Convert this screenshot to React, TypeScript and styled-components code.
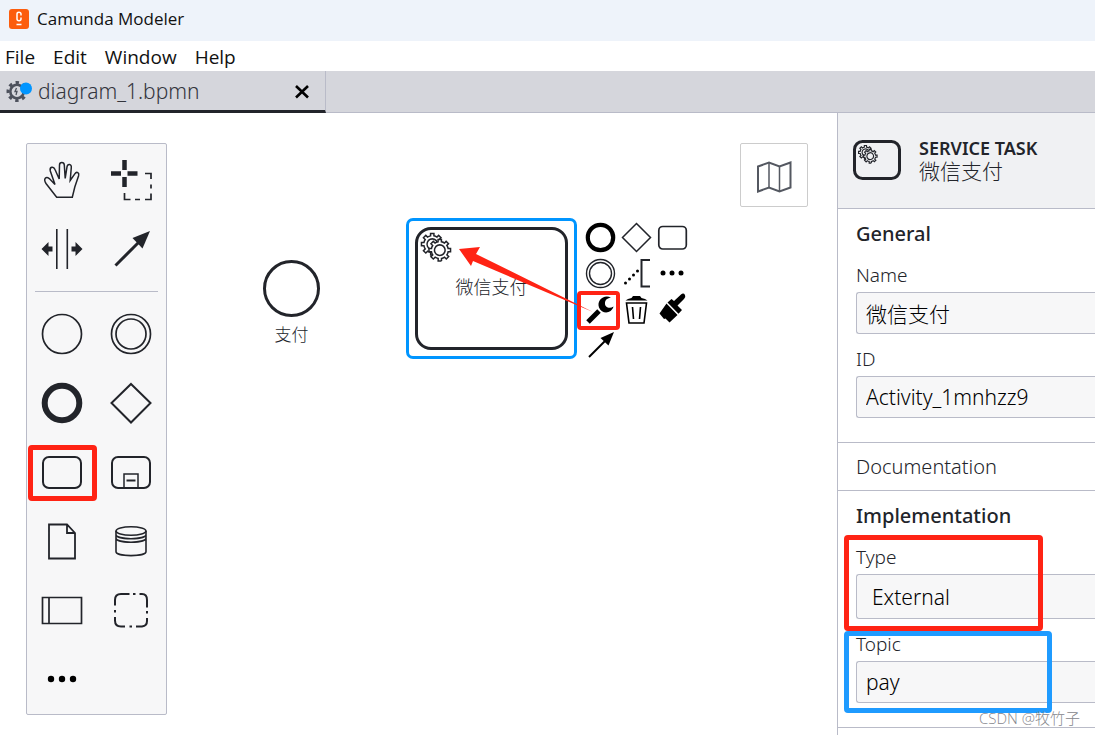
import React from 'react';
import styled, { createGlobalStyle } from 'styled-components';

const ink = '#22242a';
const line = '#b9bbc8';
const red = '#ff2314';
const blue = '#0095ff';

const Global = createGlobalStyle`
  * { box-sizing: border-box; }
  html, body, #root { height: 100%; }
  body { margin: 0; overflow: hidden; background: #fff; }
  button, input, select { font: inherit; color: inherit; margin: 0; }
  svg { display: block; flex: none; }
`;

const Window = styled.div`
  display: flex;
  flex-direction: column;
  height: 100vh;
  overflow: hidden;
  color: ${ink};
  font-family: 'Noto Sans', 'Noto Sans CJK SC', sans-serif;
  font-weight: 300;
  font-size: 21px;
`;

const TitleBar = styled.header`
  flex: none;
  display: flex;
  align-items: center;
  gap: 8px;
  height: 41px;
  padding: 0 9px 4px;
  background: #eef3fa;
  color: #111;
  font: 400 17px/24px 'Open Sans', sans-serif;
`;

const MenuBar = styled.nav`
  flex: none;
  display: flex;
  align-items: center;
  gap: 18px;
  height: 30px;
  padding: 2px 5px 0;
`;

const MenuItem = styled.button`
  border: 0;
  padding: 0;
  background: none;
  color: #111;
  font: 400 19px/24px 'Open Sans', sans-serif;
`;

const TabBar = styled.div`
  flex: none;
  display: flex;
  height: 42px;
  background: #d5d6dc;
  box-shadow: inset 0 -1px ${line};
`;

const Tab = styled.div`
  display: flex;
  align-items: center;
  width: 326px;
  padding: 0 14px 0 6px;
  border-right: 1px solid ${line};
  border-bottom: 3px solid ${ink};
`;

const TabName = styled.span`
  flex: 1;
  margin-left: 5px;
  line-height: 28px;
  color: #33353c;
`;

const IconButton = styled.button`
  display: grid;
  place-items: center;
  border: 0;
  padding: 0;
  background: none;
`;

const Workspace = styled.main`
  flex: 1;
  display: flex;
  min-height: 0;
`;

const Canvas = styled.section`
  position: relative;
  flex: 1;
  min-width: 0;
`;

const Palette = styled.div`
  position: absolute;
  left: 26px;
  top: 30px;
  width: 141px;
  padding: 1px 0;
  border: 1px solid ${line};
  border-radius: 2px;
  background: #f7f7f8;
`;

const PaletteGroup = styled.div`
  display: grid;
  grid-template-columns: 1fr 1fr;
  grid-auto-rows: 69px;
`;

const Separator = styled.hr`
  height: 1px;
  margin: 8px 8px 7px;
  border: 0;
  background: ${line};
`;

const Tool = styled(IconButton)`
  position: relative;
`;

const Mark = styled.span<{ $inset: string; $width?: number; $color?: string }>`
  position: absolute;
  inset: ${(p) => p.$inset};
  border: ${(p) => p.$width ?? 5}px solid ${(p) => p.$color ?? red};
  border-radius: 4px;
  pointer-events: none;
`;

const MapButton = styled(IconButton)`
  position: absolute;
  right: 29px;
  top: 30px;
  width: 68px;
  height: 64px;
  padding-top: 2px;
  border: 1px solid #ccc;
  border-radius: 2px;
  background: #fff;
`;

const EventNode = styled.div`
  position: absolute;
  left: 263px;
  top: 147px;
  width: 57px;
  display: flex;
  flex-direction: column;
  align-items: center;
  gap: 6px;
  font-size: 17px;
  line-height: 24px;
`;

const EventCircle = styled.div`
  width: 57px;
  height: 57px;
  border: 3px solid ${ink};
  border-radius: 50%;
`;

const TaskNode = styled.div`
  position: absolute;
  left: 406px;
  top: 105px;
  width: 171px;
  height: 141px;
  padding: 6px;
  border: 3px solid ${blue};
  border-radius: 7px;
`;

const TaskShape = styled.div`
  position: relative;
  display: grid;
  place-items: center;
  width: 100%;
  height: 100%;
  padding-bottom: 4px;
  border: 3px solid ${ink};
  border-radius: 16px;
  font-size: 18px;
  line-height: 24px;
`;

const TaskGears = styled.span`
  position: absolute;
  left: 1px;
  top: 1px;
`;

const ContextPad = styled.div`
  position: absolute;
  left: 582px;
  top: 106px;
  display: grid;
  grid-template-columns: repeat(3, 36px);
  grid-auto-rows: 36px;
`;

const Pointer = styled.svg`
  position: absolute;
  left: 456px;
  top: 130px;
  pointer-events: none;
`;

const Properties = styled.aside`
  position: relative;
  flex: none;
  width: 258px;
  border-left: 1px solid ${line};
  background: #fff;
`;

const PanelHeader = styled.div`
  display: flex;
  align-items: center;
  gap: 18px;
  height: 96px;
  padding: 0 0 2px 15px;
  border-bottom: 1px solid ${line};
  background: #f0f1f3;
`;

const ElementType = styled.div`
  font-size: 18px;
  font-weight: 600;
  line-height: 24px;
`;

const ElementName = styled.div`
  font-family: 'Liberation Sans', 'Noto Sans CJK SC', sans-serif;
  line-height: 24px;
`;

const Group = styled.section<{ $open?: boolean }>`
  padding: 0 0 ${(p) => (p.$open ? 24 : 0)}px 18px;
  border-bottom: 1px solid ${line};
`;

const GroupTitle = styled.h2<{ $open?: boolean }>`
  margin: 0;
  font-size: 20px;
  font-weight: ${(p) => (p.$open ? 500 : 300)};
  line-height: ${(p) => (p.$open ? 50 : 47)}px;
`;

const Field = styled.div`
  position: relative;
  & + & { margin-top: 9px; }
`;

const Label = styled.label`
  display: block;
  font-size: 19px;
  line-height: 33px;
`;

const Input = styled.input`
  display: block;
  width: 100%;
  height: 42px;
  padding: 0 9px;
  border: 1px solid ${line};
  border-right: 0;
  border-radius: 3px 0 0 3px;
  background: #f7f7f8;
  color: #000;
`;

const Select = styled.select`
  display: block;
  width: 100%;
  height: 45px;
  padding: 0 15px;
  border: 1px solid ${line};
  border-right: 0;
  border-radius: 3px 0 0 3px;
  background: #f7f7f8;
  color: #000;
  appearance: none;
`;

const Watermark = styled.div`
  position: absolute;
  right: 15px;
  bottom: 7px;
  color: #85868c;
  font: 300 15px/20px 'Open Sans', 'Noto Sans CJK SC', sans-serif;
  text-shadow: 1px 1px #fff;
`;

const gearPath =
  'v -1.71335 c 0.352326,-0.0705 0.703932,-0.17838 1.047628,-0.32133 0.344416,-0.14465 0.665822,-0.32133 0.966377,-0.52145 l 1.19431,1.18005 1.567487,-1.57688 -1.195028,-1.18014 c 0.403376,-0.61394 0.683079,-1.29908 0.825447,-2.01824 l 1.622133,-0.01 v -2.2196 l -1.636514,0.01 c -0.07333,-0.35153 -0.178319,-0.70024 -0.323564,-1.04372 -0.145244,-0.34406 -0.321407,-0.6644 -0.522735,-0.96217 l 1.131035,-1.13631 -1.583305,-1.56293 -1.129598,1.13589 c -0.614052,-0.40108 -1.302883,-0.68093 -2.022633,-0.82247 l 0.0093,-1.61852 h -2.241173 l 0.0042,1.63124 c -0.353763,0.0736 -0.705369,0.17977 -1.049785,0.32371 -0.344415,0.14437 -0.665102,0.32092 -0.9635006,0.52006 l -1.1698628,-1.15823 -1.5667691,1.5792 1.1684265,1.15669 c -0.4026573,0.61283 -0.68308,1.29797 -0.8247287,2.01713 l -1.6588041,0.003 v 2.22174 l 1.6724648,-0.006 c 0.073327,0.35077 0.1797598,0.70243 0.3242851,1.04472 0.1452428,0.34448 0.3214064,0.6644 0.5227339,0.96066 l -1.1993431,1.19723 1.5840256,1.56011 1.1964668,-1.19348 c 0.6140517,0.40346 1.3028827,0.68232 2.0233517,0.82331 l 7.19e-4,1.69892 h 2.226848 z m 0.221462,-3.9957 c -1.788948,0.7502 -3.8576,-0.0928 -4.6097055,-1.87438 -0.7521065,-1.78321 0.090598,-3.84627 1.8802645,-4.59604 1.78823,-0.74936 3.856881,0.0929 4.608987,1.87437 0.752106,1.78165 -0.0906,3.84612 -1.879546,4.59605 z';

const Gears = ({ size }: { size: number }) => (
  <svg width={size} height={size} viewBox="2 2 22 22" fill="#fff" stroke={ink} strokeWidth="1">
    <path d={`m 12,18 ${gearPath}`} />
    <circle cx="16" cy="14.5" r="5" stroke="none" />
    <path d={`m 17,22 ${gearPath}`} />
  </svg>
);

const Glyph = ({ size = 46, children }: { size?: number; children: React.ReactNode }) => (
  <svg width={size} height={size} viewBox={`0 0 ${size} ${size}`} fill="none" stroke={ink} strokeWidth="2">
    {children}
  </svg>
);

const Dots = ({ c, gap, r }: { c: number; gap: number; r: number }) => (
  <g fill="#000" stroke="none">
    {[-1, 0, 1].map((i) => (
      <circle key={i} cx={c + i * gap} cy={c} r={r} />
    ))}
  </g>
);

const tools: { name: string; icon: React.ReactNode }[] = [
  {
    name: 'Hand tool',
    icon: (
      <path
        strokeWidth="1.5"
        d="M17.7 40.3 L7 26.5 C4 21.8 7 19 10.3 21.6 L16 27.5 L11.3 14 C10.3 9.8 14.5 8.8 16 12.5 L20.2 22 L20.5 8 C20.6 4.8 25 4.8 25.3 8 L26.2 21.5 L28 9.8 C28.6 6.4 32.8 6.8 32.3 10.5 L31.2 23.5 L35.8 16.8 C37.8 14 40.5 15.8 39.6 18.8 L35.8 30 L33.3 40.3 Z"
      />
    ),
  },
  {
    name: 'Lasso tool',
    icon: (
      <g>
        <path strokeWidth="4.5" d="M3 16.500h10M19.500 16.500h10M16.500 3v10M16.500 20v10" />
        <path strokeWidth="1.700" d="M16.500 36v6.500h6M27 42.500h5M37 42.500h6v-6M43 31.500v-4M43 22v-5.500h-6" />
      </g>
    ),
  },
  {
    name: 'Space tool',
    icon: (
      <g>
        <path strokeWidth="1.600" d="M17.800 3v40M28.300 3v40" />
        <path fill={ink} stroke="none" d="M2.500 23l7-7v4.500h4v5h-4v4.500zM43.500 23l-7-7v4.500h-4v5h4v4.500z" />
      </g>
    ),
  },
  {
    name: 'Connect tool',
    icon: (
      <g>
        <path strokeWidth="3" d="M7.500 39.500L33 14" />
        <path fill={ink} stroke="none" d="M42 5L34.500 22.500 24.500 12z" />
      </g>
    ),
  },
];

const elements: { name: string; icon: React.ReactNode; marked?: boolean }[] = [
  { name: 'Start event', icon: <circle cx="23" cy="23" r="19.500" strokeWidth="1.700" /> },
  {
    name: 'Intermediate event',
    icon: (
      <g strokeWidth="1.700">
        <circle cx="23" cy="23" r="19.500" />
        <circle cx="23" cy="23" r="15" />
      </g>
    ),
  },
  { name: 'End event', icon: <circle cx="23" cy="23" r="17.300" strokeWidth="6" /> },
  { name: 'Gateway', icon: <path d="M23 4L42.500 23 23 42.500 3.500 23z" /> },
  { name: 'Task', marked: true, icon: <rect x="4" y="8" width="38" height="31" rx="6" /> },
  {
    name: 'Sub-process',
    icon: (
      <g>
        <rect x="4" y="8" width="38" height="31" rx="6" />
        <path strokeWidth="1.500" d="M16 39V25h14V39" />
        <path d="M18.500 31.500h9" />
      </g>
    ),
  },
  { name: 'Data object', icon: <path strokeWidth="1.800" d="M10 6.500h18l8 8.500v25.500H10zM28 6.500V15h8" /> },
  {
    name: 'Data store',
    icon: (
      <g strokeWidth="1.600">
        <ellipse cx="23" cy="13" rx="15" ry="4.200" />
        <path d="M8 13v20.500c0 5.500 30 5.500 30 0V13M8 16.500c0 5.600 30 5.600 30 0M8 20c0 5.600 30 5.600 30 0" />
      </g>
    ),
  },
  { name: 'Participant', icon: <path strokeWidth="1.700" d="M3.500 10.500h39v26h-39zM10 10.500v26" /> },
  {
    name: 'Group',
    icon: (
      <g>
        <path d="M7 18.500V13q0-6 6-6h8.500M31.500 7H34q5 0 5 6v7.500M39 31v3q0 5-5 5.500h-6M17 39.500h-4q-6 0-6-6V30" />
        <path d="M25 7h2.500M21.500 39.500H24M7 23v2.500M39 24v2.500" />
      </g>
    ),
  },
  { name: 'More elements', icon: <Dots c={23} gap={11} r={3.2} /> },
];

const padActions: { name: string; icon: React.ReactNode; marked?: boolean }[] = [
  { name: 'Append end event', icon: <circle cx="18.500" cy="18.500" r="12.700" strokeWidth="4.200" stroke="#000" /> },
  { name: 'Append gateway', icon: <path strokeWidth="1.500" d="M18.500 4.500l14 14-14 14-14-14z" /> },
  { name: 'Append task', icon: <rect x="4.800" y="7.500" width="27.500" height="22.500" rx="4" strokeWidth="1.700" /> },
  {
    name: 'Append intermediate event',
    icon: (
      <g strokeWidth="1.400">
        <circle cx="18.500" cy="18.500" r="14" />
        <circle cx="18.500" cy="18.500" r="11" />
      </g>
    ),
  },
  {
    name: 'Append text annotation',
    icon: (
      <g>
        <path d="M32 5h-8.500v26.500H32" />
        <g fill="#000" stroke="none">
          <circle cx="7.500" cy="28" r="1.500" />
          <circle cx="11.500" cy="24" r="1.500" />
          <circle cx="15.500" cy="20" r="1.500" />
          <circle cx="19.500" cy="16" r="1.500" />
        </g>
      </g>
    ),
  },
  { name: 'Append element', icon: <Dots c={18} gap={9} r={2.5} /> },
  {
    name: 'Change element',
    marked: true,
    icon: (
      <g stroke="#000">
        <path strokeWidth="5" d="M6 31L17 20" />
        <path fill="#000" stroke="none" d="M29 6.500C22 3 14.500 9 17 16.500c3 7 12.500 6.500 14.500-1-4 3-9 .5-8.500-3.500 0-3 2.500-5 6-5.500z" />
      </g>
    ),
  },
  {
    name: 'Delete',
    icon: (
      <g stroke="#000">
        <path fill="#000" stroke="none" d="M7.500 9.500q2-2 6-2.500l1.500-2h7l1.500 2q4 .5 6 2.500z" />
        <path strokeWidth="1.600" d="M8.500 12h20L26 32H11zM14.500 16l1 12M22.500 16l-1 12" />
      </g>
    ),
  },
  {
    name: 'Set color',
    icon: (
      <g fill="#000" stroke="none">
        <path d="M12.500 12.500L23.500 24 15.500 31.500 11.500 27.500 10 28 5.500 22.500z" />
        <path d="M13.500 11.500L17.500 8 20 10 27 3.500Q29.500 1.500 31 4 32 6 30 8L23.500 14.500 28 19 24.500 22.700z" />
      </g>
    ),
  },
  {
    name: 'Connect',
    icon: (
      <g stroke="#000">
        <path d="M7 30L24 13" />
        <path fill="#000" stroke="none" d="M32 5L26.500 18.500 18.500 11z" />
      </g>
    ),
  },
];

export default function App() {
  return (
    <Window>
      <Global />
      <TitleBar>
        <svg width="20" height="20" viewBox="0 0 20 20" fill="none">
          <rect width="20" height="20" rx="3" fill="#fc5d0d" />
          <path d="M12 6.500V5Q12 3.300 10 3.300T8 5v5q0 1.700 2 1.700t2-1.700V8.500M7.500 15.500h5" stroke="#fff" strokeWidth="1.500" />
        </svg>
        Camunda Modeler
      </TitleBar>
      <MenuBar>
        {['File', 'Edit', 'Window', 'Help'].map((m) => (
          <MenuItem key={m}>{m}</MenuItem>
        ))}
      </MenuBar>
      <TabBar>
        <Tab>
          <svg width="27" height="24" viewBox="0 0 27 24" fill="none">
            <circle cx="11" cy="12.500" r="6.700" stroke="#4d515c" strokeWidth="2.600" />
            <circle cx="11" cy="12.500" r="9" stroke="#4d515c" strokeWidth="3" strokeDasharray="3.4 3.668" strokeDashoffset="1.700" />
            <path d="M10.500 9l-1.500 3.500h2L10 16" stroke="#4d515c" strokeWidth="1.300" />
            <circle cx="20" cy="9.500" r="6" fill={blue} />
          </svg>
          <TabName>diagram_1.bpmn</TabName>
          <IconButton aria-label="Close tab">
            <svg width="18" height="18" viewBox="0 0 18 18" stroke="#000" strokeWidth="2.600">
              <path d="M3 4l12 11.500M15 4L3 15.500" />
            </svg>
          </IconButton>
        </Tab>
      </TabBar>
      <Workspace>
        <Canvas>
          <EventNode>
            <EventCircle />
            支付
          </EventNode>
          <TaskNode>
            <TaskShape>
              <TaskGears>
                <Gears size={33} />
              </TaskGears>
              微信支付
            </TaskShape>
          </TaskNode>
          <ContextPad>
            {padActions.map((a) => (
              <Tool key={a.name} aria-label={a.name}>
                <Glyph size={36}>{a.icon}</Glyph>
                {a.marked && <Mark $inset="0 -2px -3px -5px" $width={4} />}
              </Tool>
            ))}
          </ContextPad>
          <Pointer width="140" height="72" viewBox="0 0 140 72" fill={red}>
            <path d="M3 6L24 4 20 11 137 69 17 18 15 23z" />
          </Pointer>
          <Palette>
            <PaletteGroup>
              {tools.map((t) => (
                <Tool key={t.name} aria-label={t.name}>
                  <Glyph>{t.icon}</Glyph>
                </Tool>
              ))}
            </PaletteGroup>
            <Separator />
            <PaletteGroup>
              {elements.map((t) => (
                <Tool key={t.name} aria-label={t.name}>
                  <Glyph>{t.icon}</Glyph>
                  {t.marked && <Mark $inset="8px 0 5px 1px" />}
                </Tool>
              ))}
            </PaletteGroup>
          </Palette>
          <MapButton aria-label="Toggle minimap">
            <svg width="38" height="34" viewBox="0 0 38 34" fill="none" stroke="#545861" strokeWidth="2">
              <path d="M3 7.500L14 3.500 24.500 7.500 35.500 3.500v25L24.500 32.500 14 28.500 3 32.500z" />
              <path d="M14 3.500v25M24.500 7.500v25" strokeWidth="1.500" />
            </svg>
          </MapButton>
        </Canvas>
        <Properties>
          <PanelHeader>
            <svg width="48" height="40" viewBox="0 0 48 40">
              <rect x="1.500" y="1.500" width="45" height="37" rx="8" fill="none" stroke={ink} strokeWidth="3" />
              <svg x="4" y="4" width="21" height="21" viewBox="2 2 22 22" fill="#f0f1f3" stroke={ink} strokeWidth="1.200">
                <path d={`m 12,18 ${gearPath}`} />
                <circle cx="16" cy="14.500" r="6" stroke="none" />
                <path d={`m 17,22 ${gearPath}`} />
              </svg>
            </svg>
            <div>
              <ElementType>SERVICE TASK</ElementType>
              <ElementName>微信支付</ElementName>
            </div>
          </PanelHeader>
          <Group $open>
            <GroupTitle $open>General</GroupTitle>
            <Field>
              <Label htmlFor="name">Name</Label>
              <Input id="name" defaultValue="微信支付" />
            </Field>
            <Field>
              <Label htmlFor="id">ID</Label>
              <Input id="id" defaultValue="Activity_1mnhzz9" />
            </Field>
          </Group>
          <Group>
            <GroupTitle>Documentation</GroupTitle>
          </Group>
          <Group $open>
            <GroupTitle $open>Implementation</GroupTitle>
            <Field>
              <Label htmlFor="type">Type</Label>
              <Select id="type" defaultValue="External">
                <option>External</option>
              </Select>
              <Mark $inset="-6px 52px -12px -12px" />
            </Field>
            <Field>
              <Label htmlFor="topic">Topic</Label>
              <Input id="topic" defaultValue="pay" />
              <Mark $inset="3px 43px -10px -12px" $color="#1f9bff" />
            </Field>
          </Group>
          <Watermark>CSDN @牧竹子</Watermark>
        </Properties>
      </Workspace>
    </Window>
  );
}
